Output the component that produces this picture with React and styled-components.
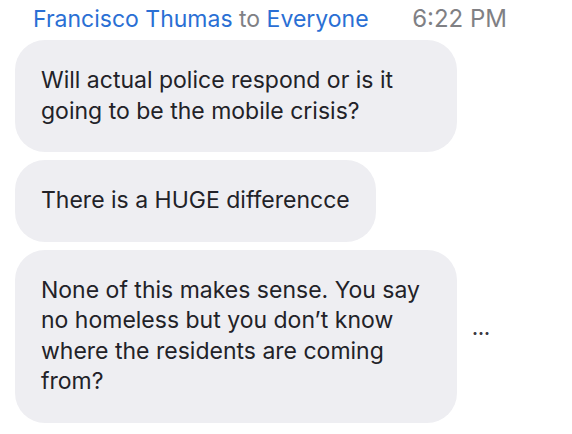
import React from "react";
import styled, { createGlobalStyle } from "styled-components";

const GlobalStyle = createGlobalStyle`
  body {
    margin: 0;
    background: #ffffff;
    font-family: Inter, "Noto Sans", sans-serif;
  }
`;

const messages = [
  "Will actual police respond or is it going to be the mobile crisis?",
  "There is a HUGE differencce",
  "None of this makes sense. You say no homeless but you don\u2019t know where the residents are coming from?",
];

const App = () => {
  return (
    <>
      <GlobalStyle />
      <Chat>
        <Header>
          <Sender>
            <Name>Francisco Thumas</Name>
            <To> to </To>
            <Name>Everyone</Name>
          </Sender>
          <Time>6:22 PM</Time>
        </Header>
        <List>
          {messages.map((text, i) => (
            <Row key={i}>
              <Bubble>{text}</Bubble>
              {i === messages.length - 1 && <More>&middot;&middot;&middot;</More>}
            </Row>
          ))}
        </List>
      </Chat>
    </>
  );
};

const Chat = styled.div`
  width: 572px;
  height: 434px;
  padding: 3px 0 0 15px;
  box-sizing: border-box;
  display: flex;
  flex-direction: column;
  gap: 5px;
`;

const Header = styled.div`
  display: flex;
  align-items: baseline;
  width: 492px;
  padding-left: 18px;
  box-sizing: border-box;
  justify-content: space-between;
  font-size: 23px;
  line-height: 32px;
`;

const Sender = styled.div`
  white-space: nowrap;
`;

const Name = styled.span`
  color: #2a6fd4;
`;

const To = styled.span`
  color: #808084;
`;

const Time = styled.span`
  color: #808084;
  font-size: 24px;
`;

const List = styled.div`
  display: flex;
  flex-direction: column;
  gap: 8px;
`;

const Row = styled.div`
  display: flex;
  align-items: center;
  gap: 15px;
`;

const Bubble = styled.div`
  max-width: 442px;
  box-sizing: border-box;
  padding: 25px 26px 26px;
  background: #eeeef2;
  border-radius: 30px;
  color: #222228;
  font-size: 23px;
  line-height: 30.5px;
`;

const More = styled.span`
  color: #3a3a40;
  font-size: 18px;
  font-weight: bold;
  margin-bottom: 6px;
`;

export default App;
